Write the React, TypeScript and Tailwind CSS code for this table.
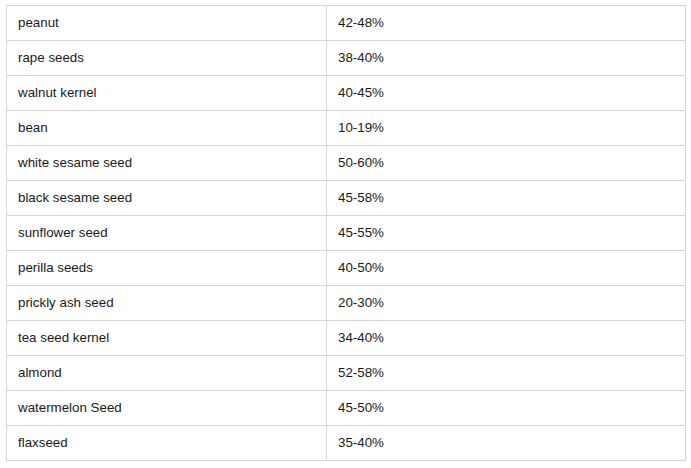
const ROWS: [string, string][] = [
  ["peanut", "42-48%"],
  ["rape seeds", "38-40%"],
  ["walnut kernel", "40-45%"],
  ["bean", "10-19%"],
  ["white sesame seed", "50-60%"],
  ["black sesame seed", "45-58%"],
  ["sunflower seed", "45-55%"],
  ["perilla seeds", "40-50%"],
  ["prickly ash seed", "20-30%"],
  ["tea seed kernel", "34-40%"],
  ["almond", "52-58%"],
  ["watermelon Seed", "45-50%"],
  ["flaxseed", "35-40%"],
];

export default function App() {
  return (
    <div className="w-[691px] h-[468px] bg-white pt-[5px] pl-[6px] font-['Liberation_Sans',Arial,sans-serif] text-[13.33px] text-[#1a1a1a]">
      <table className="border-collapse w-[680px] table-fixed">
        <colgroup>
          <col className="w-[320px]" />
          <col />
        </colgroup>
        <tbody>
          {ROWS.map(([name, pct]) => (
            <tr key={name} className="h-[35px]">
              <td className="border border-[#d4d4d4] px-[11px] align-middle">{name}</td>
              <td className="border border-[#d4d4d4] px-[11px] align-middle">{pct}</td>
            </tr>
          ))}
        </tbody>
      </table>
    </div>
  );
}
